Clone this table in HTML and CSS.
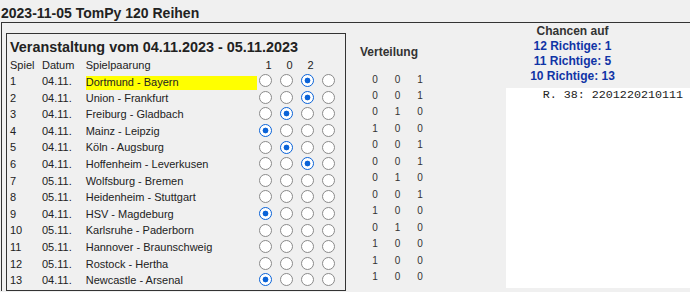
FILE: index.html
```html
<!DOCTYPE html>
<html><head>
	<meta charset="utf-8">
	<title>TomPy 120 Reihen</title>
	<link rel="stylesheet" href="styles.css">
</head><body>
	<h1 class="title">2023-11-05 TomPy 120 Reihen</h1>
	<div class="sheet">
		<div class="event">
			<h2 class="event-title">Veranstaltung vom 04.11.2023 - 05.11.2023</h2>
			<div class="games">
				<div class="row head">
					<span>Spiel</span><span>Datum</span><span>Spielpaarung</span>
					<span class="tip">1</span><span class="tip">0</span><span class="tip">2</span><span class="tip"></span>
				</div>
				<div class="row"><span>1</span><span>04.11.</span><span class="pair mark">Dortmund - Bayern</span>
					<input type="radio" name="s1"><input type="radio" name="s1"><input type="radio" name="s1" checked><input type="radio" name="s1"></div>
				<div class="row"><span>2</span><span>04.11.</span><span class="pair">Union - Frankfurt</span>
					<input type="radio" name="s2"><input type="radio" name="s2"><input type="radio" name="s2" checked><input type="radio" name="s2"></div>
				<div class="row"><span>3</span><span>04.11.</span><span class="pair">Freiburg - Gladbach</span>
					<input type="radio" name="s3"><input type="radio" name="s3" checked><input type="radio" name="s3"><input type="radio" name="s3"></div>
				<div class="row"><span>4</span><span>04.11.</span><span class="pair">Mainz - Leipzig</span>
					<input type="radio" name="s4" checked><input type="radio" name="s4"><input type="radio" name="s4"><input type="radio" name="s4"></div>
				<div class="row"><span>5</span><span>04.11.</span><span class="pair">Köln - Augsburg</span>
					<input type="radio" name="s5"><input type="radio" name="s5" checked><input type="radio" name="s5"><input type="radio" name="s5"></div>
				<div class="row"><span>6</span><span>04.11.</span><span class="pair">Hoffenheim - Leverkusen</span>
					<input type="radio" name="s6"><input type="radio" name="s6"><input type="radio" name="s6" checked><input type="radio" name="s6"></div>
				<div class="row"><span>7</span><span>05.11.</span><span class="pair">Wolfsburg - Bremen</span>
					<input type="radio" name="s7"><input type="radio" name="s7"><input type="radio" name="s7"><input type="radio" name="s7"></div>
				<div class="row"><span>8</span><span>05.11.</span><span class="pair">Heidenheim - Stuttgart</span>
					<input type="radio" name="s8"><input type="radio" name="s8"><input type="radio" name="s8"><input type="radio" name="s8"></div>
				<div class="row"><span>9</span><span>04.11.</span><span class="pair">HSV - Magdeburg</span>
					<input type="radio" name="s9" checked><input type="radio" name="s9"><input type="radio" name="s9"><input type="radio" name="s9"></div>
				<div class="row"><span>10</span><span>05.11.</span><span class="pair">Karlsruhe - Paderborn</span>
					<input type="radio" name="s10"><input type="radio" name="s10"><input type="radio" name="s10"><input type="radio" name="s10"></div>
				<div class="row"><span>11</span><span>05.11.</span><span class="pair">Hannover - Braunschweig</span>
					<input type="radio" name="s11"><input type="radio" name="s11"><input type="radio" name="s11"><input type="radio" name="s11"></div>
				<div class="row"><span>12</span><span>05.11.</span><span class="pair">Rostock - Hertha</span>
					<input type="radio" name="s12"><input type="radio" name="s12"><input type="radio" name="s12"><input type="radio" name="s12"></div>
				<div class="row"><span>13</span><span>04.11.</span><span class="pair">Newcastle - Arsenal</span>
					<input type="radio" name="s13" checked><input type="radio" name="s13"><input type="radio" name="s13"><input type="radio" name="s13"></div>
			</div>
		</div>

		<div class="dist">
			<h3 class="dist-title">Verteilung</h3>
			<div class="dist-rows">
				<span>0</span><span>0</span><span>1</span>
				<span>0</span><span>0</span><span>1</span>
				<span>0</span><span>1</span><span>0</span>
				<span>1</span><span>0</span><span>0</span>
				<span>0</span><span>0</span><span>1</span>
				<span>0</span><span>0</span><span>1</span>
				<span>0</span><span>1</span><span>0</span>
				<span>0</span><span>0</span><span>1</span>
				<span>1</span><span>0</span><span>0</span>
				<span>0</span><span>1</span><span>0</span>
				<span>1</span><span>0</span><span>0</span>
				<span>1</span><span>0</span><span>0</span>
				<span>1</span><span>0</span><span>0</span>
			</div>
		</div>

		<div class="odds">
			<h3 class="odds-title">Chancen auf</h3>
			<p class="hit">12 Richtige: 1</p>
			<p class="hit">11 Richtige: 5</p>
			<p class="hit">10 Richtige: 13</p>
			<div class="tipbox">R. 38: 2201220210111</div>
		</div>
	</div>
</body>
</html>
```

FILE: styles.css
```css
* {
	box-sizing: border-box;
}
html, body {
	overflow: hidden;
}
body {
	margin: 0;
	background-color: #f0f0f0;
	color: #222;
	font-family: "Liberation Sans", Arial, sans-serif;
	font-size: 11px;
}
.title {
	margin: 0;
	padding: 5px 0 1px 1px;
	font-size: 14px;
	line-height: 16px;
	font-weight: bold;
}
.sheet {
	display: flex;
	align-items: flex-start;
	margin-left: 1px;
	padding-left: 4px;
	border-top: 1px solid #333;
	border-left: 1px solid #333;
	height: 269px;
}

/* Spielplan */
.event {
	width: 340px;
	margin-top: 10px;
	padding: 0 0 1px 3px;
	border: 1px solid #333;
}
.event-title {
	margin: 0;
	padding-top: 4px;
	font-size: 14.4px;
	line-height: 18px;
	font-weight: bold;
}
.row {
	display: grid;
	grid-template-columns: 32px 43.7px 171.3px repeat(4, 21px);
	align-items: center;
	height: 16.6px;
	line-height: 16.6px;
	white-space: nowrap;
}
.row.head {
	align-items: start;
	height: 17px;
	padding-top: 2px;
	line-height: 15px;
}
.tip {
	padding-left: 2px;
	text-align: center;
}
.row input {
	appearance: none;
	width: 13px;
	height: 13px;
	margin: 0 3px 1px 2px;
	border: 1.7px solid #8a8a8a;
	border-radius: 50%;
	background-color: #fff;
}
.row input:checked {
	border-color: #0a63d8;
	background: radial-gradient(circle, #0a63d8 0 2.6px, #fff 3.2px);
}
.mark {
	align-self: stretch;
	margin-top: 3px;
	line-height: 13.6px;
	background-color: #ffff00;
}

/* Verteilung */
.dist {
	width: 95px;
	margin-left: 14px;
	padding-top: 22px;
}
.dist-title, .odds-title {
	margin: 0;
	font-size: 12px;
	line-height: 15px;
	font-weight: bold;
	color: #333;
}
.dist-rows {
	display: grid;
	grid-template-columns: repeat(3, 22.5px);
	grid-auto-rows: 16.47px;
	align-items: center;
	margin-top: 11.5px;
	padding-left: 3.75px;
	font-size: 10px;
	line-height: 16.47px;
	text-align: center;
	color: #333;
}

/* Chancen */
.odds {
	flex: 1;
	padding-top: 1px;
	text-align: center;
}
.hit {
	margin: 0;
	font-size: 12px;
	line-height: 15px;
	font-weight: bold;
	color: #1034a6;
}
.tipbox {
	margin: 4px 0 0 51px;
	height: 200px;
	padding-right: 7px;
	background-color: #fff;
	font-family: "Liberation Mono", "Courier New", monospace;
	font-size: 11.7px;
	line-height: 14px;
	text-align: right;
	color: #222;
}
```
